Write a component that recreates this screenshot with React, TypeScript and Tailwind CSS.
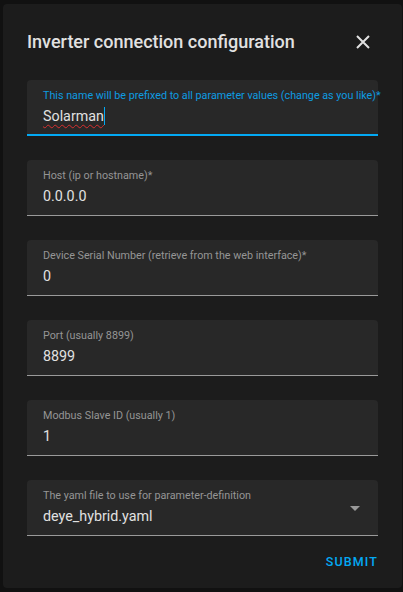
import React from 'react';

const fields = [
  { label: 'Host (ip or hostname)*', value: '0.0.0.0' },
  { label: 'Device Serial Number (retrieve from the web interface)*', value: '0' },
  { label: 'Port (usually 8899)', value: '8899' },
  { label: 'Modbus Slave ID (usually 1)', value: '1' },
];

export default function App() {
  return (
    <div
      className="w-[403px] h-[592px] bg-[#111111] pt-[4px] pl-[3px] overflow-hidden"
      style={{ fontFamily: 'Roboto, "Noto Sans", sans-serif' }}
    >
      <div className="w-[399px] h-[584px] bg-[#1c1c1c] rounded-[4px] px-6 pt-6 flex flex-col">
        <div className="flex items-center justify-between h-7">
          <h1 className="text-[18px] leading-7 font-medium text-[#e1e1e1]">Inverter connection configuration</h1>
          <svg width="14" height="14" viewBox="0 0 14 14" className="mr-2">
            <path d="M1 1 L13 13 M13 1 L1 13" stroke="#e1e1e1" strokeWidth="2" />
          </svg>
        </div>

        <div className="mt-6 flex flex-col gap-6">
          <div className="h-14 bg-[#282828] rounded-t-[4px] border-b-2 border-[#03a9f4] px-4 pt-2 pb-[6px] flex flex-col">
            <span className="text-[10.75px] leading-4 text-[#0e9be0] whitespace-nowrap">
              This name will be prefixed to all parameter values (change as you like)*
            </span>
            <span className="text-[14.3px] leading-6 text-[#e1e1e1] flex items-center">
              <span className="underline decoration-wavy decoration-[#d83030] decoration-1 underline-offset-[3px]">Solarman</span>
              <span className="w-px h-[18px] bg-[#03a9f4]" />
            </span>
          </div>

          {fields.map((f) => (
            <div key={f.label} className="h-14 bg-[#282828] rounded-t-[4px] border-b border-[#9a9a9a] px-4 pt-2 pb-[7px] flex flex-col">
              <span className="text-[10.75px] leading-4 text-[#959595] whitespace-nowrap">{f.label}</span>
              <span className="text-[14.3px] leading-6 text-[#e1e1e1]">{f.value}</span>
            </div>
          ))}

          <div className="h-14 bg-[#282828] rounded-t-[4px] border-b border-[#9a9a9a] pl-4 pr-[18px] pt-2 pb-[7px] flex items-center justify-between">
            <div className="flex flex-col self-start">
              <span className="text-[10.75px] leading-4 text-[#959595] whitespace-nowrap">The yaml file to use for parameter-definition</span>
              <span className="text-[14.3px] leading-6 text-[#e1e1e1]">deye_hybrid.yaml</span>
            </div>
            <svg width="10" height="5" viewBox="0 0 10 5">
              <path d="M0 0 L10 0 L5 5 Z" fill="#9a9a9a" />
            </svg>
          </div>
        </div>

        <div className="mt-2 flex justify-end">
          <button className="h-9 px-2 -mr-2 text-[12.5px] font-medium tracking-[1.1px] text-[#03a9f4]">SUBMIT</button>
        </div>
      </div>
    </div>
  );
}
